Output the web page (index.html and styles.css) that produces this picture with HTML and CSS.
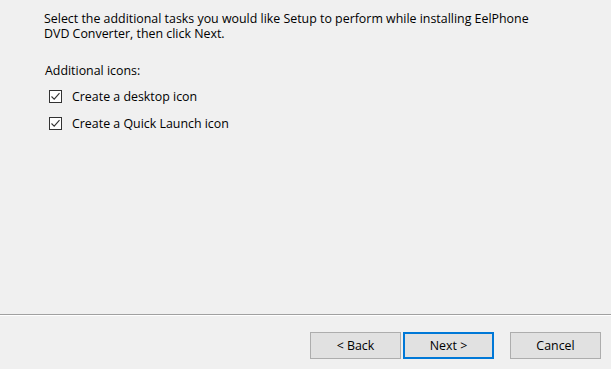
FILE: index.html
```html
<!DOCTYPE html>
<html lang="en">
<head>
    <meta charset="UTF-8">
    <meta name="viewport" content="width=device-width, initial-scale=1.0">
    <title>Setup - EelPhone DVD Converter</title>
    <link rel="stylesheet" href="styles.css">
</head>
<body>
    <div class="wizard">
        <div class="page">
            <p class="intro">Select the additional tasks you would like Setup to perform while installing EelPhone<br>DVD Converter, then click Next.</p>
            <p class="group-label">Additional icons:</p>
            <label class="task">
                <span class="box">
                    <svg width="11" height="11" viewBox="0 0 11 11"><path d="M1.5 5.5 L4.2 8.2 L9.5 2.2" fill="none" stroke="#333" stroke-width="1.1"/></svg>
                </span>
                Create a desktop icon
            </label>
            <label class="task">
                <span class="box">
                    <svg width="11" height="11" viewBox="0 0 11 11"><path d="M1.5 5.5 L4.2 8.2 L9.5 2.2" fill="none" stroke="#333" stroke-width="1.1"/></svg>
                </span>
                Create a Quick Launch icon
            </label>
        </div>

        <div class="footer">
            <button class="btn back" type="button">&lt; Back</button>
            <button class="btn next" type="button">Next &gt;</button>
            <button class="btn cancel" type="button">Cancel</button>
        </div>
    </div>
</body>
</html>
```

FILE: styles.css
```css
:root {
    --face-color: #f0f0f0;
    --button-color: #e1e1e1;
    --button-border: #adadad;
    --focus-color: #0078d7;
    --text-color: #000;
}

body {
    font-family: 'Open Sans', 'Noto Sans', sans-serif;
    font-size: 12.4px;
    line-height: 15px;
    margin: 0;
    padding: 0;
    background-color: var(--face-color);
    color: var(--text-color);
}

.wizard {
    height: 100vh;
    display: flex;
    flex-direction: column;
}

.page {
    flex: 1;
    padding: 11px 0 0 44px;
}

.intro {
    margin: 0;
}

.group-label {
    margin: 22px 0 5px 1px;
}

.task {
    display: flex;
    align-items: center;
    height: 27px;
    margin-left: 5px;
}

.box {
    width: 11px;
    height: 11px;
    border: 1px solid #333;
    background-color: #fff;
    margin-right: 10px;
    display: flex;
}

.footer {
    border-top: 1px solid #a0a0a0;
    box-shadow: inset 0 1px 0 #fff;
    height: 55px;
    box-sizing: border-box;
    padding: 17px 10px 0 0;
    display: flex;
    justify-content: flex-end;
    align-items: flex-start;
}

.btn {
    width: 91px;
    height: 27px;
    font-family: inherit;
    font-size: 12.4px;
    color: var(--text-color);
    background-color: var(--button-color);
    border: 1px solid var(--button-border);
    padding: 0;
}

.next {
    border: 2px solid var(--focus-color);
    margin-left: 2px;
}

.cancel {
    margin-left: 16px;
}
```
